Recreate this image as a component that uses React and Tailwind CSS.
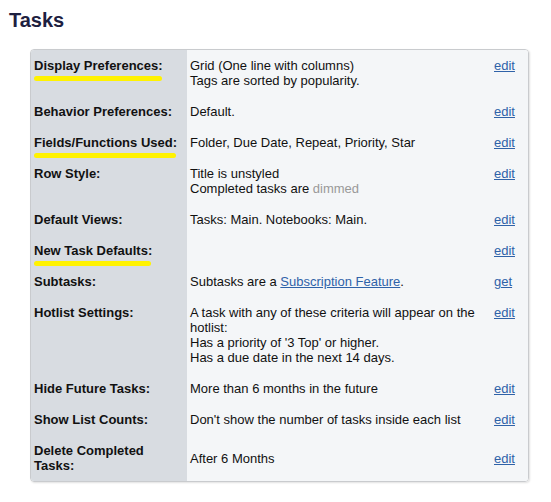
const ROWS = [
  {
    label: "Display Preferences:",
    mark: true,
    value: ["Grid (One line with columns)", "Tags are sorted by popularity."],
  },
  { label: "Behavior Preferences:", value: ["Default."] },
  {
    label: "Fields/Functions Used:",
    mark: true,
    value: ["Folder, Due Date, Repeat, Priority, Star"],
  },
  { label: "Row Style:", value: ["Title is unstyled", "dimmed"] },
  { label: "Default Views:", value: ["Tasks: Main. Notebooks: Main."] },
  { label: "New Task Defaults:", mark: true, value: [] },
  { label: "Subtasks:", value: ["subscription"], action: "get" },
  {
    label: "Hotlist Settings:",
    value: [
      "A task with any of these criteria will appear on the hotlist:",
      "Has a priority of '3 Top' or higher.",
      "Has a due date in the next 14 days.",
    ],
  },
  { label: "Hide Future Tasks:", value: ["More than 6 months in the future"] },
  { label: "Show List Counts:", value: ["Don't show the number of tasks inside each list"] },
  { label: "Delete Completed Tasks:", value: ["After 6 Months"], center: true },
];

function ValueLine({ text }) {
  if (text === "dimmed") {
    return (
      <div>
        Completed tasks are <span className="text-[#999999]">dimmed</span>
      </div>
    );
  }
  if (text === "subscription") {
    return (
      <div>
        Subtasks are a{" "}
        <a href="#" className="text-[#2f62a8] underline">
          Subscription Feature
        </a>
        .
      </div>
    );
  }
  return <div>{text}</div>;
}

export default function App() {
  return (
    <div
      className="w-[551px] h-[502px] bg-white pt-2 text-[#111]"
      style={{ fontFamily: '"Liberation Sans", Arial, Helvetica, sans-serif' }}
    >
      <h1 className="pl-[9px] text-[20px] leading-6 font-bold text-[#1d2040]">Tasks</h1>

      {/* Settings table */}
      <div className="ml-[30px] mt-[17px] w-[499px] rounded-[4px] border border-[#c9cbce] overflow-hidden shadow-[1px_1px_2px_rgba(0,0,0,0.12)]">
        <div className="grid grid-cols-[156px_304px_1fr] text-[13px] leading-[15px]">
          {ROWS.map((row) => (
            <div key={row.label} className="contents">
              <div className="bg-[#d8dce1] pl-[3px] pr-2 py-2 font-bold">
                <span className="relative inline-block">
                  {row.label}
                  {row.mark && (
                    <span className="absolute left-0 right-[1px] top-[18px] h-[5px] rounded-full bg-[#fff200]" />
                  )}
                </span>
              </div>
              <div
                className={`bg-[#f4f6f8] pl-[3px] pr-2 py-2 ${
                  row.center ? "flex flex-col justify-center" : ""
                }`}
              >
                {row.value.map((v) => (
                  <ValueLine key={v} text={v} />
                ))}
              </div>
              <div
                className={`bg-[#f4f6f8] pl-[3px] py-2 ${
                  row.center ? "flex flex-col justify-center" : ""
                }`}
              >
                <a href="#" className="text-[#2f62a8] underline">
                  {row.action || "edit"}
                </a>
              </div>
            </div>
          ))}
        </div>
      </div>
    </div>
  );
}
